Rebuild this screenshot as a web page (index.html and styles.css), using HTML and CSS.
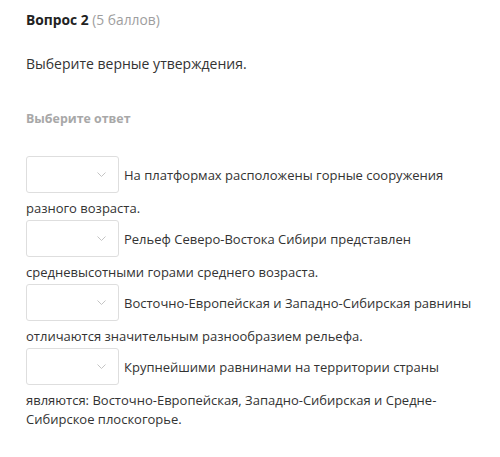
FILE: index.html
```html
<!DOCTYPE html>
<html lang="ru">
<head>
<meta charset="utf-8">
<link rel="stylesheet" href="styles.css">
</head>
<body>
<div class="page">
  <div class="q-head"><span class="q-num">Вопрос 2</span> <span class="q-points">(5 баллов)</span></div>
  <div class="q-text">Выберите верные утверждения.</div>
  <div class="q-label">Выберите ответ</div>
  <div class="answers">
    <div class="item"><span class="sel"><svg class="chev" width="9" height="5" viewBox="0 0 9 5"><polyline points="0.5,0.5 4.5,4.5 8.5,0.5" fill="none" stroke="#c4c4c4" stroke-width="1"/></svg></span>На платформах расположены горные сооружения разного возраста.</div>
    <div class="item"><span class="sel"><svg class="chev" width="9" height="5" viewBox="0 0 9 5"><polyline points="0.5,0.5 4.5,4.5 8.5,0.5" fill="none" stroke="#c4c4c4" stroke-width="1"/></svg></span>Рельеф Северо-Востока Сибири представлен средневысотными горами среднего возраста.</div>
    <div class="item"><span class="sel"><svg class="chev" width="9" height="5" viewBox="0 0 9 5"><polyline points="0.5,0.5 4.5,4.5 8.5,0.5" fill="none" stroke="#c4c4c4" stroke-width="1"/></svg></span>Восточно-Европейская и Западно-Сибирская равнины отличаются значительным разнообразием рельефа.</div>
    <div class="item"><span class="sel"><svg class="chev" width="9" height="5" viewBox="0 0 9 5"><polyline points="0.5,0.5 4.5,4.5 8.5,0.5" fill="none" stroke="#c4c4c4" stroke-width="1"/></svg></span>Крупнейшими равнинами на территории страны являются: Восточно-Европейская, Западно-Сибирская и Средне-Сибирское плоскогорье.</div>
  </div>
</div>
</body>
</html>
```
FILE: styles.css
```css
html, body {
  margin: 0;
  padding: 0;
  background: #ffffff;
}
body {
  font-family: "Open Sans", "Noto Sans", sans-serif;
  color: #333333;
}
.page {
  padding: 11px 0 0 26px;
  width: 460px;
}
.q-head {
  font-size: 13.8px;
  line-height: 18px;
}
.q-num {
  font-weight: 700;
  color: #222222;
}
.q-points {
  color: #9e9e9e;
}
.q-text {
  margin-top: 25px;
  font-size: 14px;
  line-height: 20px;
}
.q-label {
  margin-top: 37px;
  font-size: 12.4px;
  line-height: 16px;
  font-weight: 700;
  color: #a8a8a8;
}
.answers {
  margin-top: 27px;
}
.item {
  font-size: 13px;
  line-height: 19px;
}
.sel {
  display: inline-flex;
  align-items: center;
  justify-content: flex-end;
  box-sizing: border-box;
  width: 93px;
  height: 37px;
  border: 1px solid #dedede;
  border-radius: 3px;
  padding-right: 12px;
  margin: 2px 5px 6px 0;
  vertical-align: middle;
  background: #fff;
}
.chev {
  display: block;
}
```
